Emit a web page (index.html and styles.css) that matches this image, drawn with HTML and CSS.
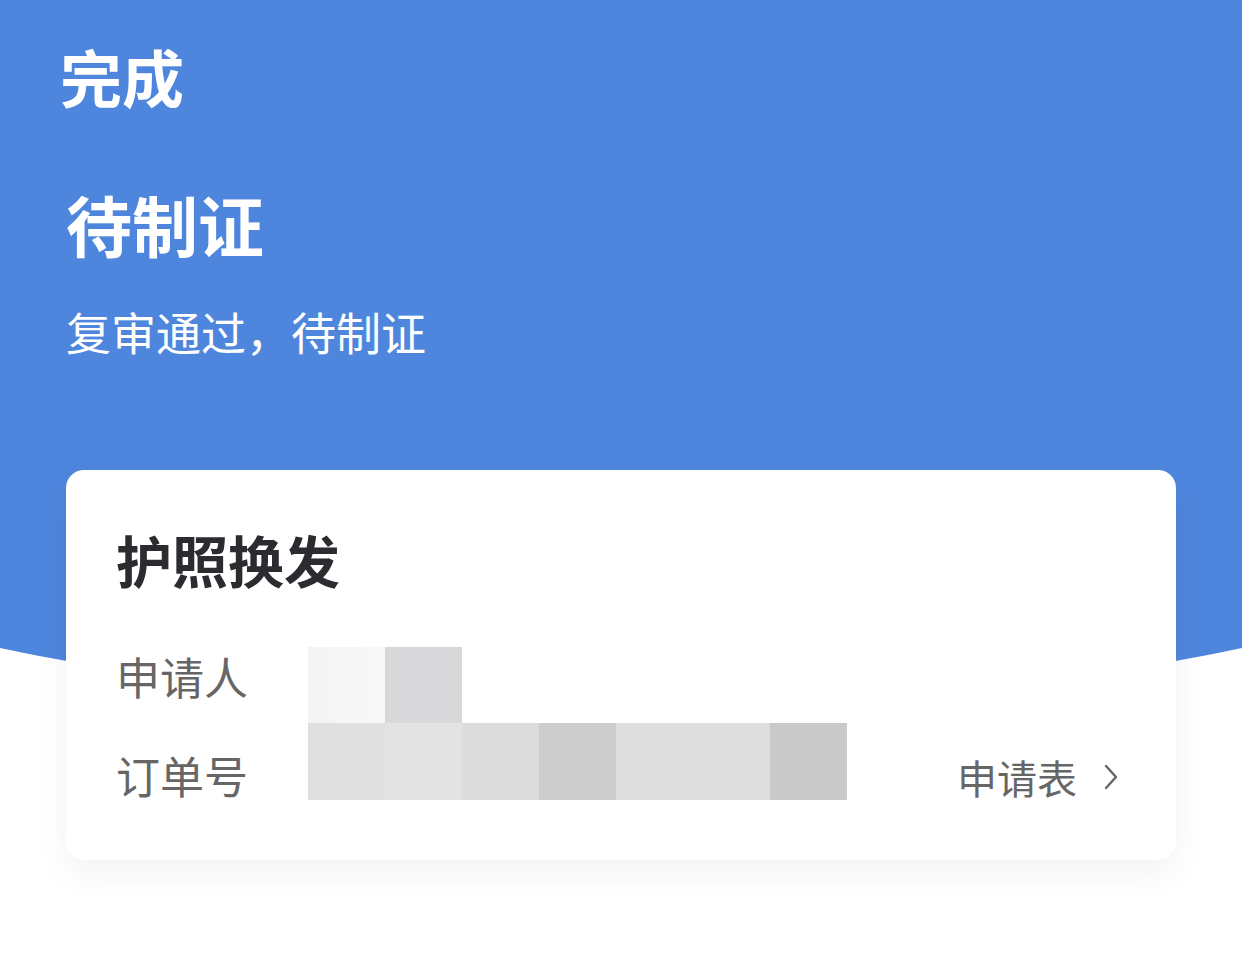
FILE: index.html
```html
<!DOCTYPE html>
<html lang="zh-CN">
<head>
  <meta charset="UTF-8">
  <meta name="viewport" content="width=device-width, initial-scale=1.0">
  <title>护照换发 - 待制证</title>
  <link rel="stylesheet" href="styles.css">
</head>
<body>

<div class="header">
  <div class="nav-done">完成</div>
  <div class="status">待制证</div>
  <div class="status-desc">复审通过，待制证</div>
</div>

<div class="card">
  <div class="card-title">护照换发</div>

  <div class="rows">
    <div class="row">
      <span class="label">申请人</span>
    </div>
    <div class="row">
      <span class="label">订单号</span>
      <a class="form-link" href="#">申请表
        <svg class="chevron" width="14" height="26" viewBox="0 0 14 26">
          <polyline points="2,2 12,13 2,24" fill="none" stroke="#666" stroke-width="2.4" stroke-linecap="round" stroke-linejoin="round"/>
        </svg>
      </a>
    </div>

    <!-- redacted values -->
    <div class="mosaic">
      <i class="m-a"></i><i class="m-b"></i><i></i><i></i><i></i><i></i><i></i>
      <i class="m-c"></i><i class="m-d"></i><i class="m-e"></i><i class="m-f"></i><i class="m-g"></i><i class="m-g"></i><i class="m-h"></i>
    </div>
  </div>
</div>

</body>
</html>
```

FILE: styles.css
```css
* {
  margin: 0;
  padding: 0;
  box-sizing: border-box;
}
body {
  background: #ffffff;
  font-family: "Noto Sans CJK SC", "Noto Sans", sans-serif;
  color: #2b2b30;
  padding-bottom: 120px;
}
.header {
  height: 709px;
  background: #4f86dd;
  color: #ffffff;
  padding: 36px 0 0 66px;
  clip-path: ellipse(100% 455px at 50% 254px);
}
.nav-done {
  font-size: 62px;
  font-weight: bold;
  line-height: 80px;
  margin-left: -6px;
}
.status {
  margin-top: 62px;
  font-size: 66px;
  font-weight: bold;
  line-height: 90px;
}
.status-desc {
  margin-top: 34px;
  font-size: 45px;
  line-height: 60px;
}
.card {
  position: relative;
  z-index: 1;
  margin: -239px 66px 0;
  padding: 50px 58px 36px 50px;
  background: #ffffff;
  border-radius: 18px;
  box-shadow: 0 14px 34px rgba(0, 0, 0, 0.05);
}
.card-title {
  font-size: 56px;
  font-weight: bold;
  line-height: 78px;
  color: #2b2b30;
}
.rows {
  position: relative;
  margin-top: 28px;
}
.row {
  display: flex;
  align-items: center;
  justify-content: space-between;
  height: 99px;
}
.label {
  font-size: 44px;
  color: #666666;
}
.form-link {
  display: flex;
  align-items: center;
  gap: 27px;
  margin-top: 4px;
  font-size: 40px;
  color: #666666;
  text-decoration: none;
}
.mosaic {
  position: absolute;
  left: 192px;
  top: 21px;
  display: grid;
  grid-template-columns: repeat(7, 77px);
  grid-template-rows: 76px 77px;
}
.m-a { background: linear-gradient(90deg, #f4f4f4, #f8f8f8); }
.m-b { background: #d8d8da; }
.m-c { background: #e0e0e0; }
.m-d { background: #e3e3e3; }
.m-e { background: #dcdcdd; }
.m-f { background: #cdcdcd; }
.m-g { background: #dedede; }
.m-h { background: #c9c9c9; }
```
